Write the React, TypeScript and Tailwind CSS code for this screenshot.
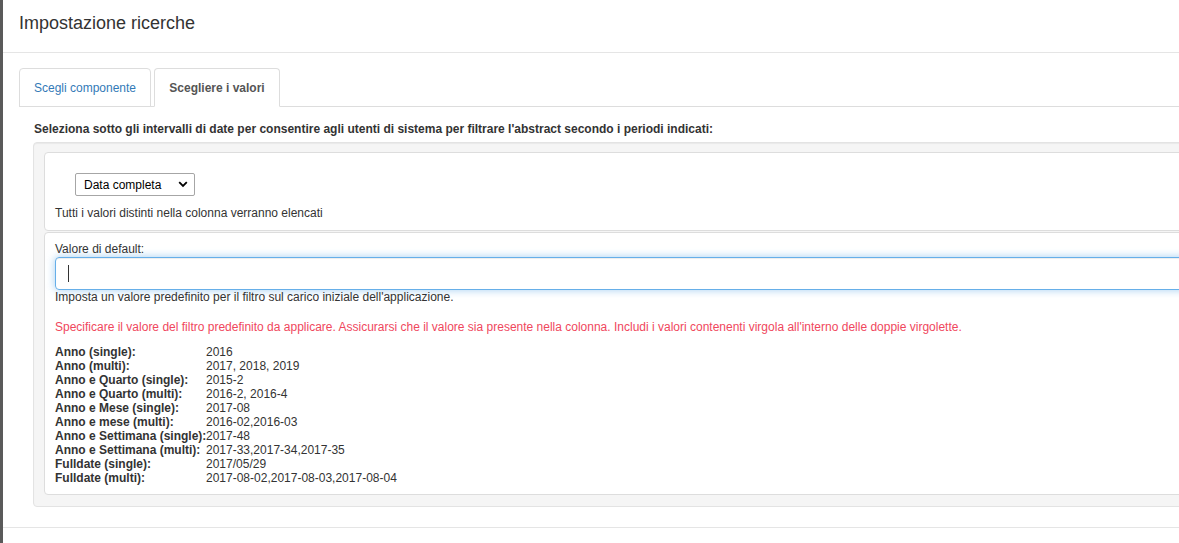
import React from 'react'

const examples: [string, string][] = [
  ['Anno (single):', '2016'],
  ['Anno (multi):', '2017, 2018, 2019'],
  ['Anno e Quarto (single):', '2015-2'],
  ['Anno e Quarto (multi):', '2016-2, 2016-4'],
  ['Anno e Mese (single):', '2017-08'],
  ['Anno e mese (multi):', '2016-02,2016-03'],
  ['Anno e Settimana (single):', '2017-48'],
  ['Anno e Settimana (multi):', '2017-33,2017-34,2017-35'],
  ['Fulldate (single):', '2017/05/29'],
  ['Fulldate (multi):', '2017-08-02,2017-08-03,2017-08-04'],
]

const App = () => {
  return (
    <div className="flex h-[543px] w-[1179px] overflow-hidden bg-white text-[12px] text-[#333] font-['Liberation_Sans',Arial,sans-serif]">
      <div className="w-[3px] shrink-0 bg-[#5a5a5a]" />
      <div className="w-[1320px] shrink-0 bg-white">
        {/* Header */}
        <div className="h-[53px] border-b border-[#e5e5e5] pl-[16px] pt-[13px]">
          <h4 className="text-[18px] leading-[20px] text-[#333]">Impostazione ricerche</h4>
        </div>

        {/* Body */}
        <div className="px-[16px] pt-[15px]">
          <ul className="flex border-b border-[#ddd]">
            <li className="mb-[-1px] mr-[3px] flex h-[39px] w-[132px] items-center justify-center rounded-t-[4px] border border-[#ddd] text-[#337ab7]">
              Scegli componente
            </li>
            <li className="mb-[-1px] flex h-[39px] w-[126px] items-center justify-center rounded-t-[4px] border border-[#ddd] border-b-white bg-white font-bold text-[#555]">
              Scegliere i valori
            </li>
          </ul>

          <p className="ml-[15px] mt-[14px] font-bold leading-[17px]">
            Seleziona sotto gli intervalli di date per consentire agli utenti di sistema per filtrare l'abstract secondo i periodi indicati:
          </p>

          {/* Well */}
          <div className="ml-[14px] mt-[4px] rounded-[4px] border border-[#e3e3e3] bg-[#f5f5f5] px-[10px] pb-[11px] pt-[9px] shadow-[inset_0_1px_1px_rgba(0,0,0,0.05)]">
            <div className="h-[79px] rounded-[4px] border border-[#ddd] bg-white px-[10px] pt-[20px]">
              <div className="ml-[20px] flex h-[23px] w-[120px] items-center justify-between rounded-[2px] border border-[#a6a6a6] bg-white pl-[8px] pr-[6px] text-black">
                <span>Data completa</span>
                <svg width="10" height="7" viewBox="0 0 10 7">
                  <path d="M1.2 1.2 L5 5 L8.8 1.2" fill="none" stroke="#000" strokeWidth="1.8" />
                </svg>
              </div>
              <p className="mt-[9px] leading-[17px]">Tutti i valori distinti nella colonna verranno elencati</p>
            </div>

            <div className="mt-[1px] h-[263px] rounded-[4px] border border-[#ddd] bg-white px-[10px] pt-[8px]">
              <label className="block leading-[16px]">Valore di default:</label>
              <div className="flex h-[33px] items-center rounded-[4px] border border-[#66afe9] pl-[12px] shadow-[inset_0_1px_1px_rgba(0,0,0,0.075),0_0_8px_rgba(102,175,233,0.6)]">
                <span className="h-[17px] w-px bg-[#333]" />
              </div>
              <p className="leading-[14px]">Imposta un valore predefinito per il filtro sul carico iniziale dell'applicazione.</p>
              <p className="mt-[16px] leading-[14px] text-[#f0475d]">
                Specificare il valore del filtro predefinito da applicare. Assicurarsi che il valore sia presente nella colonna. Includi i valori contenenti virgola all'interno delle doppie virgolette.
              </p>
              <div className="mt-[11px] grid grid-cols-[151px_1fr] leading-[14px]">
                {examples.map(([k, v]) => (
                  <React.Fragment key={k}>
                    <span className="whitespace-nowrap font-bold">{k}</span>
                    <span>{v}</span>
                  </React.Fragment>
                ))}
              </div>
            </div>
          </div>
        </div>

        {/* Footer */}
        <div className="mt-[20px] h-[20px] border-t border-[#e5e5e5]" />
      </div>
    </div>
  )
}

export default App
